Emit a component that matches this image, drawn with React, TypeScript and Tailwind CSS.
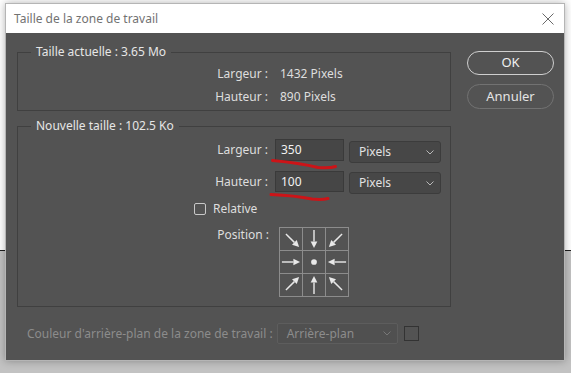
import React from 'react';

const font = { fontFamily: '"Noto Sans", "Open Sans", sans-serif' };

const Chevron = ({ color = '#b8b8b8' }: { color?: string }) => (
  <svg width="8" height="5" viewBox="0 0 8 5">
    <path d="M0.5 0.5 L4 4 L7.5 0.5" fill="none" stroke={color} strokeWidth="1" />
  </svg>
);

const Select = ({ label }: { label: string }) => (
  <div className="w-[92px] h-[22px] flex items-center justify-between pl-[9px] pr-[6px] bg-[#474747] border border-[#3c3c3c] rounded-[3px] text-[12px] text-[#e2e2e2]">
    <span>{label}</span>
    <Chevron />
  </div>
);

// arrow pointing toward the centre of the grid, drawn in a 23x23 cell
const Arrow = ({ dx, dy }: { dx: number; dy: number }) => {
  const c = 11.5;
  if (dx === 0 && dy === 0) {
    return (
      <svg width="22" height="22" viewBox="0 0 23 23">
        <circle cx={c} cy={c} r="3" fill="#e8e8e8" />
      </svg>
    );
  }
  const diag = dx !== 0 && dy !== 0;
  const len = Math.hypot(dx, dy);
  const ux = dx / len;
  const uy = dy / len;
  const tipOff = diag ? 12 : 9.5;
  const tailOff = diag ? -7.5 : -9.5;
  const tip = [c + ux * tipOff, c + uy * tipOff];
  const tail = [c + ux * tailOff, c + uy * tailOff];
  const base = [tip[0] - ux * 7, tip[1] - uy * 7];
  const px = -uy * 3.5;
  const py = ux * 3.5;
  const head = `${tip[0]},${tip[1]} ${base[0] + px},${base[1] + py} ${base[0] - px},${base[1] - py}`;
  return (
    <svg width="22" height="22" viewBox="0 0 23 23">
      <line x1={tail[0]} y1={tail[1]} x2={base[0]} y2={base[1]} stroke="#e8e8e8" strokeWidth="1.5" />
      <polygon points={head} fill="#e8e8e8" />
    </svg>
  );
};

const cells = [
  [1, 1], [0, 1], [-1, 1],
  [1, 0], [0, 0], [-1, 0],
  [1, -1], [0, -1], [-1, -1],
];

export default function App() {
  return (
    <div className="relative w-[571px] h-[373px] overflow-hidden flex flex-col" style={font}>
      <div className="h-[250px] bg-white" />
      <div className="h-[1px] bg-[#1e1e1e]" />
      <div className="flex-1 bg-[#c2c2c2]" />

      <div className="absolute left-[5px] top-[3px] w-[560px] h-[358px] flex flex-col border border-[#b5b5b5] shadow-[0_0_8px_rgba(0,0,0,0.3)]">
        <div className="h-[29px] bg-white flex items-center justify-between pl-[8px] pr-[10px]">
          <span className="text-[12px] text-[#727272]">Taille de la zone de travail</span>
          <svg width="12" height="12" viewBox="0 0 12 12">
            <path d="M0.5 0.5 L11.5 11.5 M11.5 0.5 L0.5 11.5" stroke="#6a6a6a" strokeWidth="1" />
          </svg>
        </div>

        <div className="flex-1 bg-[#535353] pt-[11px] pl-[11px] pr-[10px] text-[12px] text-[#dedede]">
          <div className="flex gap-[16px]">
            <div className="w-[434px] flex flex-col">
              <fieldset className="border border-[#404040] pb-[2px]">
                <legend className="ml-[13px] px-[5px] leading-[16px] text-[#e6e6e6]">Taille actuelle : 3.65 Mo</legend>
                <div className="grid grid-cols-[250px_1fr] gap-x-[12px] leading-[23px] pt-[2px]">
                  <span className="text-right">Largeur :</span>
                  <span>1432 Pixels</span>
                  <span className="text-right">Hauteur :</span>
                  <span>890 Pixels</span>
                </div>
              </fieldset>

              <fieldset className="mt-[7px] border border-[#404040] pb-[9px]">
                <legend className="ml-[13px] px-[5px] leading-[16px] text-[#e6e6e6]">Nouvelle taille : 102.5 Ko</legend>
                <div className="flex items-start mt-[5px]">
                  <span className="w-[250px] text-right leading-[22px]">Largeur :</span>
                  <div className="ml-[7px] w-[69px] h-[22px] pl-[5px] bg-[#464646] border border-[#3a3a3a] leading-[20px] text-[#f2f2f2]">350</div>
                  <div className="ml-[5px] mt-[2px]"><Select label="Pixels" /></div>
                </div>
                <div className="flex items-start mt-[8px]">
                  <span className="w-[250px] text-right leading-[22px]">Hauteur :</span>
                  <div className="ml-[7px] w-[69px] h-[21px] pl-[5px] bg-[#464646] border border-[#3a3a3a] leading-[19px] text-[#f2f2f2]">100</div>
                  <div className="ml-[5px] mt-[1px]"><Select label="Pixels" /></div>
                </div>
                <div className="flex items-center mt-[8px] ml-[176px] h-[13px]">
                  <div className="w-[12px] h-[12px] rounded-[2px] border border-[#c8c8c8]" />
                  <span className="ml-[7px]">Relative</span>
                </div>
                <div className="flex items-start mt-[12px]">
                  <span className="w-[251px] text-right leading-[16px]">Position :</span>
                  <div className="ml-[10px] grid grid-cols-3 border-l border-t border-[#8c8c8c]">
                    {cells.map(([dx, dy], i) => (
                      <div key={i} className="w-[23px] h-[23px] border-r border-b border-[#8c8c8c] flex items-center justify-center">
                        <Arrow dx={dx} dy={dy} />
                      </div>
                    ))}
                  </div>
                </div>
              </fieldset>
            </div>

            <div className="w-[87px] flex flex-col gap-[9px] pt-[7px]">
              <button className="h-[24px] rounded-full border-[1.5px] border-[#cfcfcf] text-[13px] text-[#f0f0f0]">OK</button>
              <button className="h-[25px] rounded-full border border-[#727272] text-[13px] text-[#e4e4e4]">Annuler</button>
            </div>
          </div>

          <div className="flex items-center mt-[16px] ml-[10px] h-[21px]">
            <span className="text-[#8c8c8c]">Couleur d'arrière-plan de la zone de travail :</span>
            <div className="ml-[4px] w-[121px] h-[21px] flex items-center justify-between pl-[9px] pr-[6px] bg-[#505050] border border-[#5d5d5d] rounded-[2px] text-[#8c8c8c]">
              <span>Arrière-plan</span>
              <Chevron color="#777777" />
            </div>
            <div className="ml-[6px] w-[15px] h-[15px] border-[1.5px] border-[#333333]" />
          </div>
        </div>
      </div>

      <svg className="absolute left-0 top-0" width="571" height="373" viewBox="0 0 571 373">
        <path d="M272.5 160.5 Q300 163 318 167.5 Q330 168.5 335.5 166.5" fill="none" stroke="#cc1418" strokeWidth="3" strokeLinecap="round" />
        <path d="M271 194.5 Q295 195.5 312 199 Q322 200 328 198.5" fill="none" stroke="#cc1418" strokeWidth="3" strokeLinecap="round" />
      </svg>
    </div>
  );
}
